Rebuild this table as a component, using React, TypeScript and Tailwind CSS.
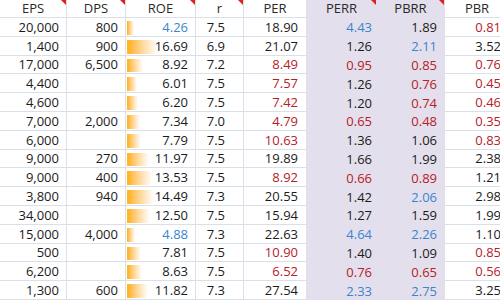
import clsx from 'clsx';

type Tone = 'k' | 'b' | 'r';

interface Row {
  eps: string;
  dps: string;
  roe: [string, Tone];
  r: string;
  per: [string, Tone];
  perr: [string, Tone];
  pbrr: [string, Tone];
  pbr: [string, Tone];
}

const ROWS: Row[] = [
  { eps: '20,000', dps: '800', roe: ['4.26', 'b'], r: '7.5', per: ['18.90', 'k'], perr: ['4.43', 'b'], pbrr: ['1.89', 'k'], pbr: ['0.81', 'r'] },
  { eps: '1,400', dps: '900', roe: ['16.69', 'k'], r: '6.9', per: ['21.07', 'k'], perr: ['1.26', 'k'], pbrr: ['2.11', 'b'], pbr: ['3.52', 'k'] },
  { eps: '17,000', dps: '6,500', roe: ['8.92', 'k'], r: '7.2', per: ['8.49', 'r'], perr: ['0.95', 'r'], pbrr: ['0.85', 'r'], pbr: ['0.76', 'r'] },
  { eps: '4,400', dps: '', roe: ['6.01', 'k'], r: '7.5', per: ['7.57', 'r'], perr: ['1.26', 'k'], pbrr: ['0.76', 'r'], pbr: ['0.45', 'r'] },
  { eps: '4,600', dps: '', roe: ['6.20', 'k'], r: '7.5', per: ['7.42', 'r'], perr: ['1.20', 'k'], pbrr: ['0.74', 'r'], pbr: ['0.46', 'r'] },
  { eps: '7,000', dps: '2,000', roe: ['7.34', 'k'], r: '7.0', per: ['4.79', 'r'], perr: ['0.65', 'r'], pbrr: ['0.48', 'r'], pbr: ['0.35', 'r'] },
  { eps: '6,000', dps: '', roe: ['7.79', 'k'], r: '7.5', per: ['10.63', 'r'], perr: ['1.36', 'k'], pbrr: ['1.06', 'k'], pbr: ['0.83', 'r'] },
  { eps: '9,000', dps: '270', roe: ['11.97', 'k'], r: '7.5', per: ['19.89', 'k'], perr: ['1.66', 'k'], pbrr: ['1.99', 'k'], pbr: ['2.38', 'k'] },
  { eps: '9,000', dps: '400', roe: ['13.53', 'k'], r: '7.5', per: ['8.92', 'r'], perr: ['0.66', 'r'], pbrr: ['0.89', 'r'], pbr: ['1.21', 'k'] },
  { eps: '3,800', dps: '940', roe: ['14.49', 'k'], r: '7.3', per: ['20.55', 'k'], perr: ['1.42', 'k'], pbrr: ['2.06', 'b'], pbr: ['2.98', 'k'] },
  { eps: '34,000', dps: '', roe: ['12.50', 'k'], r: '7.5', per: ['15.94', 'k'], perr: ['1.27', 'k'], pbrr: ['1.59', 'k'], pbr: ['1.99', 'k'] },
  { eps: '15,000', dps: '4,000', roe: ['4.88', 'b'], r: '7.3', per: ['22.63', 'k'], perr: ['4.64', 'b'], pbrr: ['2.26', 'b'], pbr: ['1.10', 'k'] },
  { eps: '500', dps: '', roe: ['7.81', 'k'], r: '7.5', per: ['10.90', 'r'], perr: ['1.40', 'k'], pbrr: ['1.09', 'k'], pbr: ['0.85', 'r'] },
  { eps: '6,200', dps: '', roe: ['8.63', 'k'], r: '7.5', per: ['6.52', 'r'], perr: ['0.76', 'r'], pbrr: ['0.65', 'r'], pbr: ['0.56', 'r'] },
  { eps: '1,300', dps: '600', roe: ['11.82', 'k'], r: '7.3', per: ['27.54', 'k'], perr: ['2.33', 'b'], pbrr: ['2.75', 'b'], pbr: ['3.25', 'k'] },
];

const toneClass: Record<Tone, string> = {
  k: 'text-[#1b1b1b]',
  b: 'text-[#3a85cc]',
  r: 'text-[#b52127]',
};

// red comment marker in the corner of a header cell
function Marker() {
  return <span className="absolute top-0 right-0 w-0 h-0 border-t-[5px] border-l-[5px] border-t-[#e0201b] border-l-transparent" />;
}

function Head({ label, w, mark, shaded, last }: { label: string; w: string; mark?: boolean; shaded?: boolean; last?: boolean }) {
  return (
    <div
      className={clsx(
        'relative shrink-0 h-full flex items-center justify-center border-b pb-[1px]',
        w,
        shaded ? 'bg-[#e4dfec] border-[#e4dfec]' : 'border-[#dadfe8]',
        !last && 'border-r',
      )}
    >
      {label}
      {mark ? <Marker /> : null}
    </div>
  );
}

export default function App() {
  return (
    <div
      className="w-[500px] h-[300px] overflow-hidden bg-white text-[13px] text-[#1b1b1b] leading-none"
      style={{ fontFamily: '"Open Sans", "Noto Sans", sans-serif' }}
    >
      <div className="flex h-[18px] text-[#2a2a2a]">
        <Head label="EPS" w="w-[67px]" mark />
        <Head label="DPS" w="w-[59px]" mark />
        <Head label="ROE" w="w-[70px]" mark />
        <Head label="r" w="w-[48px]" mark />
        <div className="shrink-0 w-[63px] h-full flex items-center justify-center border-b border-r border-b-[#dadfe8] border-r-[#e4dfec] pb-[1px]">
          PER
        </div>
        <Head label="PERR" w="w-[70px]" mark shaded />
        <Head label="PBRR" w="w-[68px]" mark shaded />
        <Head label="PBR" w="w-[64px]" last />
      </div>

      {ROWS.map((row, i) => {
        const v = parseFloat(row.roe[0]);
        const barWidth = Math.max(2, v * 1.92 - 1.2);

        return (
          <div key={i} className="flex h-[18.8px]">
            <div className="shrink-0 w-[67px] flex items-center justify-end pr-[7px] pt-[1px] border-r border-b border-[#dadfe8]">
              {row.eps}
            </div>
            <div className="shrink-0 w-[59px] flex items-center justify-end pr-[7px] pt-[1px] border-r border-b border-[#dadfe8]">
              {row.dps}
            </div>
            <div className="relative shrink-0 w-[70px] flex items-center justify-end pr-[7px] pt-[1px] border-r border-b border-[#dadfe8]">
              <div
                className="absolute left-[1px] top-[3px] bottom-[1px] bg-gradient-to-r from-[#ffb628] from-10% to-white"
                style={{ width: barWidth }}
              />
              <span className={clsx('relative', toneClass[row.roe[1]])}>{row.roe[0]}</span>
            </div>
            <div className="shrink-0 w-[48px] flex items-center justify-end pr-[18px] pt-[1px] border-r border-b border-[#dadfe8]">
              {row.r}
            </div>
            <div
              className={clsx(
                'shrink-0 w-[63px] flex items-center justify-end pr-[8px] pt-[1px] border-r border-b border-b-[#dadfe8] border-r-[#e4dfec]',
                toneClass[row.per[1]],
              )}
            >
              {row.per[0]}
            </div>
            <div className={clsx('shrink-0 w-[70px] flex items-center justify-end pr-[5px] pt-[1px] bg-[#e4dfec]', toneClass[row.perr[1]])}>
              {row.perr[0]}
            </div>
            <div className={clsx('shrink-0 w-[68px] flex items-center justify-end pr-[8px] pt-[1px] bg-[#e4dfec]', toneClass[row.pbrr[1]])}>
              {row.pbrr[0]}
            </div>
            <div className={clsx('shrink-0 w-[64px] flex items-center justify-end pr-[8px] pt-[1px] border-b border-[#dadfe8]', toneClass[row.pbr[1]])}>
              {row.pbr[0]}
            </div>
          </div>
        );
      })}
    </div>
  );
}
